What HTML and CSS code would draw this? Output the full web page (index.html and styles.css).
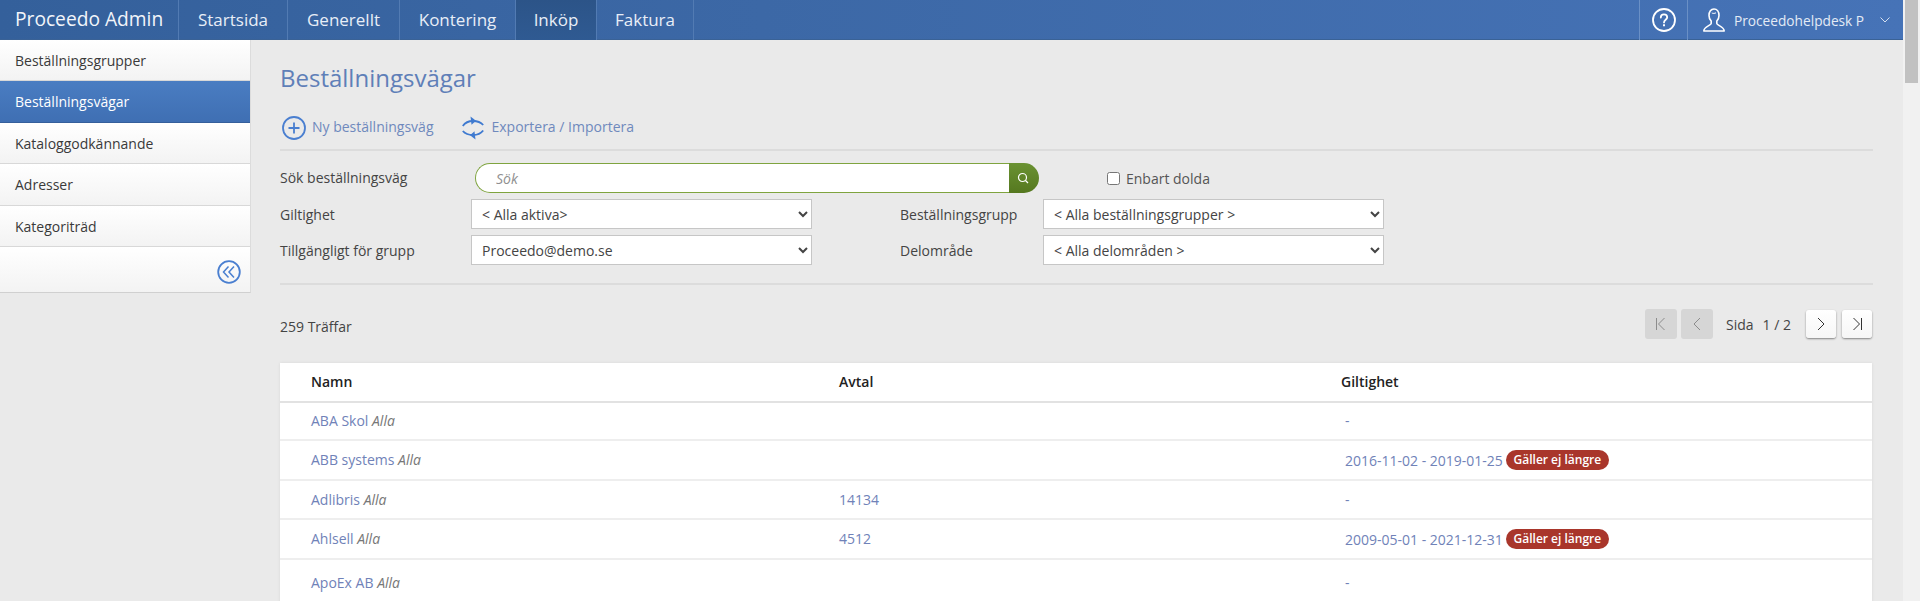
FILE: index.html
```html
<!DOCTYPE html>
<html lang="sv">
<head>
  <meta charset="UTF-8">
  <title>Beställningsvägar</title>
  <link rel="stylesheet" href="styles.css">
</head>
<body>
  <div class="page">
    <header class="topbar">
      <a class="brand">Proceedo Admin</a>
      <nav class="topnav">
        <a class="w-startsida">Startsida</a>
        <a class="w-generellt">Generellt</a>
        <a class="w-kontering">Kontering</a>
        <a class="w-inkop active">Inköp</a>
        <a class="w-faktura">Faktura</a>
      </nav>
      <div class="top-right">
        <div class="help">
          <svg width="24" height="24" viewBox="0 0 24 24" fill="none" stroke="#fff" stroke-width="1.800">
            <circle cx="12" cy="12" r="11"/>
            <path d="M8.800 9.500c0-2 1.400-3.200 3.200-3.200s3.200 1.200 3.200 2.900c0 2.500-3.200 2.600-3.200 5.200" stroke-linecap="round"/>
            <path d="M12 16.200v2" stroke-width="2"/>
          </svg>
        </div>
        <div class="user">
          <svg width="22" height="24" viewBox="0 0 22 24" fill="none" stroke="#fff" stroke-width="1.600" stroke-linejoin="round">
            <path d="M6 7.500C6 3.700 8 1 11 1s5 2.700 5 6.500c0 2.500-.9 4.300-2.200 5.600v2.400c0 2 7.300 2.800 7.400 7.500H.8c.1-4.700 7.400-5.500 7.400-7.500v-2.400C6.900 11.800 6 10 6 7.500z"/>
            <path d="M8.800 5c1.300.6 2.900.5 4.200-.2" stroke-width="1"/>
          </svg>
          <span class="user-name">Proceedohelpdesk P</span>
          <svg class="caret" width="10" height="6" viewBox="0 0 10 6" fill="none" stroke="#d5e0f0"><path d="M.5.500 5 5 9.500.5"/></svg>
        </div>
      </div>
    </header>

    <div class="layout">
      <aside class="sidebar">
        <a>Beställningsgrupper</a>
        <a class="current">Beställningsvägar</a>
        <a>Kataloggodkännande</a>
        <a>Adresser</a>
        <a>Kategoriträd</a>
        <div class="collapse">
          <svg width="24" height="24" viewBox="0 0 24 24" fill="none" stroke="#4a7fd0">
            <circle cx="12" cy="12" r="10.800" stroke-width="1.800"/>
            <path d="M11.500 6.500 6.500 12l5 5.500M17 6.500 12 12l5 5.500" stroke-width="1.500"/>
          </svg>
        </div>
      </aside>

      <main class="content">
        <h1>Beställningsvägar</h1>

        <div class="actions">
          <a class="action">
            <svg width="24" height="24" viewBox="0 0 24 24" fill="none" stroke="#4a7fd0">
              <circle cx="12" cy="12" r="11" stroke-width="1.800"/>
              <path d="M12 6.500v11M6.500 12h11" stroke-width="1.800"/>
            </svg>
            Ny beställningsväg
          </a>
          <a class="action">
            <svg width="24" height="24" viewBox="0 0 24 24" fill="none" stroke="#3f7ad0" stroke-width="1.800">
              <path d="M1.800 10C4 6.800 7.500 5 12 5c4.300 0 7.800 1.300 10.200 4"/>
              <path d="M22.200 14.500C20 17.400 16.500 19 12 19c-4.300 0-7.800-1.300-10.200-4"/>
              <path d="M9.500.5l5.500 4.300-4.500 4z" fill="#3f7ad0" stroke="none"/>
              <path d="M14.500 23.500 9 19.200l4.500-4z" fill="#3f7ad0" stroke="none"/>
            </svg>
            Exportera / Importera
          </a>
        </div>

        <form class="filters">
          <div class="filter-row search-row">
            <label class="lbl">Sök beställningsväg</label>
            <div class="search">
              <input type="text" placeholder="Sök">
              <button type="button" class="search-btn">
                <svg width="12" height="12" viewBox="0 0 12 12" fill="none" stroke="#fff" stroke-width="1.200">
                  <circle cx="5.500" cy="5.500" r="4"/>
                  <path d="M8.500 8.500 11 11"/>
                </svg>
              </button>
            </div>
            <label class="check"><input type="checkbox"> Enbart dolda</label>
          </div>
          <div class="filter-row">
            <label class="lbl">Giltighet</label>
            <select><option>&lt; Alla aktiva&gt;</option></select>
            <label class="lbl lbl2">Beställningsgrupp</label>
            <select><option>&lt; Alla beställningsgrupper &gt;</option></select>
          </div>
          <div class="filter-row">
            <label class="lbl">Tillgängligt för grupp</label>
            <select><option>Proceedo@demo.se</option></select>
            <label class="lbl lbl2">Delområde</label>
            <select><option>&lt; Alla delområden &gt;</option></select>
          </div>
        </form>

        <div class="result-bar">
          <span class="hits">259 Träffar</span>
          <div class="pager">
            <button class="off" type="button">
              <svg width="12" height="16" viewBox="0 0 12 16" fill="none" stroke="#8c8c8c"><path d="M1.500 2v12M9.500 2 3.500 8l6 6"/></svg>
            </button>
            <button class="off" type="button">
              <svg width="8" height="14" viewBox="0 0 8 14" fill="none" stroke="#8c8c8c"><path d="M7 1 1 7l6 6"/></svg>
            </button>
            <span class="sida">Sida</span>
            <span class="count">1 / 2</span>
            <button type="button">
              <svg width="8" height="14" viewBox="0 0 8 14" fill="none" stroke="#333"><path d="M1 1l6 6-6 6"/></svg>
            </button>
            <button type="button">
              <svg width="12" height="16" viewBox="0 0 12 16" fill="none" stroke="#333"><path d="M10.500 2v12M2.500 2l6 6-6 6"/></svg>
            </button>
          </div>
        </div>

        <div class="table-wrap">
          <table>
            <colgroup>
              <col class="col-name">
              <col class="col-avtal">
              <col>
            </colgroup>
            <thead>
              <tr><th>Namn</th><th>Avtal</th><th>Giltighet</th></tr>
            </thead>
            <tbody>
              <tr class="r1"><td>ABA Skol <i>Alla</i></td><td></td><td class="dates">-</td></tr>
              <tr class="r2"><td>ABB systems <i>Alla</i></td><td></td><td class="dates">2016-11-02 - 2019-01-25 <span class="badge">Gäller ej längre</span></td></tr>
              <tr class="r3"><td>Adlibris <i>Alla</i></td><td>14134</td><td class="dates">-</td></tr>
              <tr class="r2"><td>Ahlsell <i>Alla</i></td><td>4512</td><td class="dates">2009-05-01 - 2021-12-31 <span class="badge">Gäller ej längre</span></td></tr>
              <tr class="r5"><td>ApoEx AB <i>Alla</i></td><td></td><td class="dates">-</td></tr>
            </tbody>
          </table>
        </div>
      </main>
    </div>
  </div>

  <div class="scrollbar"><div class="thumb"></div></div>
</body>
</html>
```

FILE: styles.css
```css
html, body {
  height: 100%;
  overflow: hidden;
}

body {
  margin: 0;
  display: flex;
  font-family: "Open Sans", Arial, sans-serif;
  font-size: 14px;
  color: #444;
  background: #eaeaea;
}

.page {
  width: 1903px;
  flex: none;
}

.scrollbar {
  width: 17px;
  flex: none;
  background: #f1f1f1;
  padding: 0 2px;
  box-sizing: border-box;
}

.thumb {
  height: 83px;
  background: #c1c1c1;
}

/* top bar */
.topbar {
  height: 40px;
  display: flex;
  align-items: stretch;
  color: #fff;
  background: linear-gradient(90deg, #34609b 0%, #3c68a6 40%, #4673b7 100%);
  box-shadow: inset 0 -1px 0 #3a6296;
}

.brand {
  width: 163px;
  padding-left: 15px;
  font-size: 19.200px;
  line-height: 38px;
  color: #f2f5fa;
  border-right: 1px solid #527bb3;
  white-space: nowrap;
}

.topnav {
  display: flex;
}

.topnav a {
  box-sizing: border-box;
  text-align: center;
  font-size: 17px;
  line-height: 39px;
  color: #e8eef7;
  border-right: 1px solid #527bb3;
}

.w-startsida { width: 109px; }
.w-generellt { width: 112px; }
.w-kontering { width: 116px; }
.w-inkop { width: 81px; }
.w-faktura { width: 97px; }

.topnav a.active {
  background: linear-gradient(180deg, #2c5488, #2f5a92);
}

.top-right {
  margin-left: auto;
  display: flex;
}

.help {
  width: 47px;
  display: flex;
  align-items: center;
  justify-content: center;
  border-left: 1px solid #6a90c6;
  border-right: 1px solid #6a90c6;
}

.user {
  width: 215px;
  display: flex;
  align-items: center;
  padding-left: 15px;
  box-sizing: border-box;
}

.user-name {
  margin-left: 9px;
  font-size: 13.700px;
  color: #e4ebf5;
  white-space: nowrap;
}

.caret {
  margin-left: 16px;
}

/* sidebar */
.layout {
  display: flex;
  align-items: flex-start;
}

.sidebar {
  width: 251px;
  flex: none;
  box-sizing: border-box;
  border-right: 1px solid #dcdcdc;
  border-bottom: 1px solid #d0d0d0;
  background: #fff;
}

.sidebar a {
  display: block;
  box-sizing: border-box;
  height: 41.400px;
  padding-left: 15px;
  font-size: 14px;
  line-height: 41px;
  color: #3a3a3a;
  background: linear-gradient(180deg, #fff, #f3f3f3);
  border-bottom: 1px solid #d8d8d8;
}

.sidebar a.current {
  color: #fff;
  background: linear-gradient(180deg, #4a7dc2, #3f6fb3);
  border-bottom: 1px solid #355f9b;
}

.collapse {
  height: 45px;
  display: flex;
  justify-content: flex-end;
  align-items: flex-end;
  padding: 0 9px 8px 0;
  box-sizing: border-box;
  background: linear-gradient(180deg, #fff, #f3f3f3);
}

/* main */
.content {
  width: 1593px;
  margin-left: 29px;
}

h1 {
  margin: 0;
  padding-top: 22px;
  height: 32px;
  font-size: 24px;
  font-weight: 400;
  line-height: 32px;
  color: #5f7fb8;
}

.actions {
  margin-top: 22px;
  height: 31px;
  padding-bottom: 2px;
  display: flex;
  gap: 26px;
  border-bottom: 2px solid #dcdcdc;
}

.action {
  display: flex;
  align-items: flex-start;
  gap: 6px;
  font-size: 14px;
  line-height: 22px;
  color: #6f89bd;
  padding-left: 2px;
}

.filters {
  height: 134px;
  padding-top: 12px;
  box-sizing: border-box;
  border-bottom: 2px solid #dcdcdc;
}

.filter-row {
  display: flex;
  align-items: center;
  height: 30px;
  margin-bottom: 6px;
}

.lbl {
  width: 191px;
  flex: none;
  color: #444;
  font-size: 14px;
}

.lbl2 {
  width: 143px;
  margin-left: 88px;
}

.search-row .lbl {
  width: 195px;
  margin-top: -2px;
}

select {
  width: 341px;
  height: 30px;
  padding: 1px 6px 0;
  box-sizing: border-box;
  font-family: "Open Sans", Arial, sans-serif;
  font-size: 14px;
  color: #444;
  background: #fff;
  border: 1px solid #c6c6c6;
  border-radius: 0;
}

.search {
  width: 564px;
  height: 30px;
  flex: none;
  display: flex;
}

.search input {
  flex: 1;
  min-width: 0;
  box-sizing: border-box;
  padding: 1px 0 0 20px;
  font-family: "Open Sans", Arial, sans-serif;
  font-size: 14px;
  background: #fff;
  border: 1.500px solid #7fa43f;
  border-right: 0;
  border-radius: 15px 0 0 15px;
  outline: none;
}

.search input::placeholder {
  font-style: italic;
  color: #8f8f8f;
}

.search-btn {
  width: 30px;
  padding: 0 2px 0 0;
  border: 0;
  border-radius: 0 15px 15px 0;
  background: linear-gradient(180deg, #6a9232, #55781f);
  display: flex;
  align-items: center;
  justify-content: center;
}

.check {
  margin-left: 68px;
  display: flex;
  align-items: center;
  gap: 6px;
  font-size: 14px;
  color: #555;
}

.check input {
  width: 13px;
  height: 13px;
  margin: 0;
}

/* results */
.result-bar {
  height: 78px;
  display: flex;
  align-items: center;
  justify-content: space-between;
  font-size: 14px;
  padding-right: 1px;
}

.hits {
  margin-top: 4px;
}

.pager {
  display: flex;
  align-items: center;
}

.pager button {
  width: 30px;
  height: 28px;
  padding: 0;
  display: flex;
  align-items: center;
  justify-content: center;
  background: linear-gradient(180deg, #fff, #f6f6f6);
  border: 0;
  border-radius: 3px;
  box-shadow: 0 1px 2px rgba(0,0,0,0.45);
}

.pager button:last-child {
  margin-left: 6px;
}

.pager button.off {
  width: 32px;
  height: 30px;
  background: #d6d6d6;
  box-shadow: none;
}

.pager button.off + button.off {
  margin-left: 4px;
}

.sida {
  margin-left: 13px;
}

.count {
  margin: 0 15px 0 9px;
}

.table-wrap {
  width: 1592px;
  background: #fff;
  box-shadow: 0 0 3px rgba(0,0,0,0.08);
}

table {
  width: 100%;
  border-collapse: collapse;
  table-layout: fixed;
}

.col-name { width: 559px; }
.col-avtal { width: 502px; }

th {
  height: 39px;
  padding: 0 0 2px;
  box-sizing: border-box;
  text-align: left;
  font-size: 14px;
  font-weight: 600;
  color: #222;
  border-bottom: 2px solid #e2e2e2;
}

th:first-child, td:first-child {
  padding-left: 31px;
}

td {
  padding: 0 0 1px;
  font-size: 14px;
  color: #7082b8;
  border-bottom: 2px solid #eeeeee;
}

td i {
  color: #777;
}

.r1 td { height: 35px; }
.r2 td { height: 37px; }
.r3 td { height: 36px; }
.r5 td { height: 44px; }

td.dates {
  padding-left: 4px;
}

.badge {
  display: inline-block;
  height: 20px;
  padding: 0 8px;
  margin-left: -1px;
  font-size: 12px;
  font-weight: 600;
  line-height: 19px;
  color: #fff;
  background: #a9362b;
  border-radius: 10px;
  vertical-align: 2px;
}
```
